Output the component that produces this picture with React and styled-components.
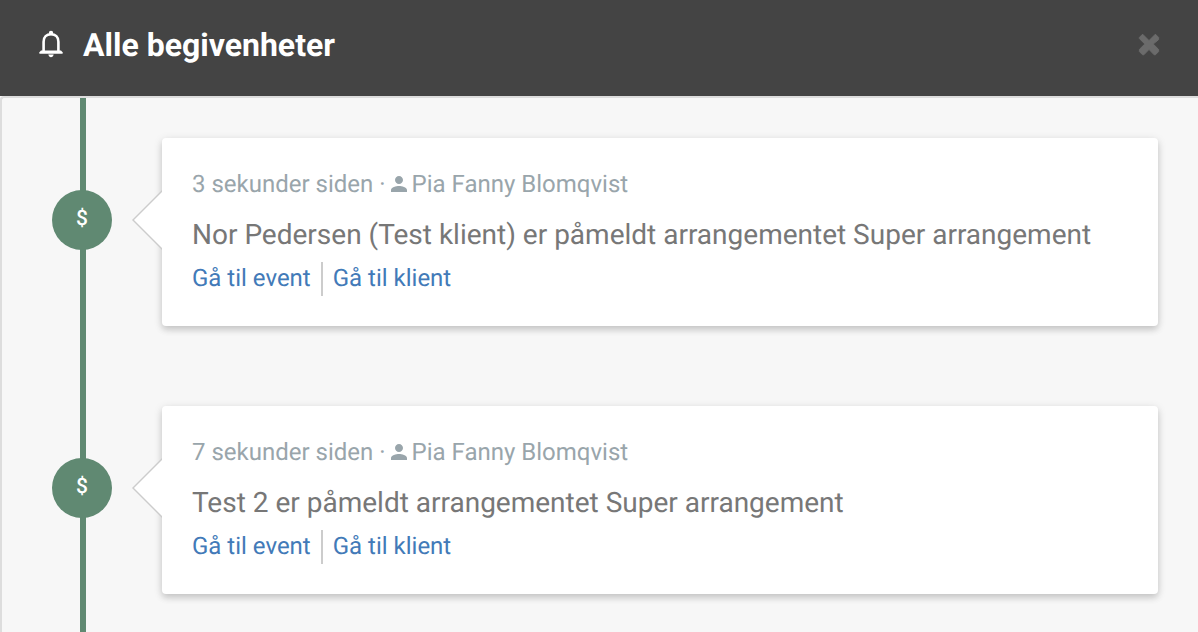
import React from 'react'
import styled, { createGlobalStyle } from 'styled-components'

const events = [
  {
    id: 1,
    time: '3 sekunder siden',
    user: 'Pia Fanny Blomqvist',
    text: 'Nor Pedersen (Test klient) er påmeldt arrangementet Super arrangement',
  },
  {
    id: 2,
    time: '7 sekunder siden',
    user: 'Pia Fanny Blomqvist',
    text: 'Test 2 er påmeldt arrangementet Super arrangement',
  },
]

function BellIcon() {
  return (
    <svg width="24" height="28" viewBox="0 0 24 28" fill="none" aria-hidden="true">
      <path d="M4.6 22V11.8C4.6 7 7.6 4.3 12 4.3s7.4 2.7 7.4 7.5V22" stroke="#fff" strokeWidth="2.6" />
      <path d="M2 20.6h20l1.6 1.6v1.5H.4v-1.5z" fill="#fff" />
      <path d="M9.3 24.6h5.4c-.3 1.6-1.4 2.6-2.7 2.6s-2.4-1-2.7-2.6z" fill="#fff" />
      <circle cx="12" cy="3" r="2.2" fill="#fff" />
    </svg>
  )
}

function CloseIcon() {
  return (
    <svg width="22" height="24" viewBox="0 0 22 24" aria-hidden="true">
      <path
        d="M4.6 2.2L11 8.6l6.4-6.4 3.2 3.2v2.2L15.2 12l5.4 5.4v2.2l-3.2 3.2h-1.2L11 17.4l-5.2 5.4H4.6l-3.2-3.2v-2.2L6.8 12 1.4 6.6V5.4z"
        fill="#6b6b6b"
        stroke="#6b6b6b"
        strokeWidth="1"
        strokeLinejoin="round"
      />
    </svg>
  )
}

function PersonIcon() {
  return (
    <svg width="16" height="16" viewBox="4 4 16 16" fill="currentColor" aria-hidden="true">
      <path d="M12 12c2.21 0 4-1.79 4-4s-1.79-4-4-4-4 1.79-4 4 1.79 4 4 4zm0 2c-2.67 0-8 1.34-8 4v2h16v-2c0-2.66-5.33-4-8-4z" />
    </svg>
  )
}

function App() {
  return (
    <>
      <GlobalStyle />
      <Header>
        <BellIcon />
        <Title>Alle begivenheter</Title>
        <CloseButton type="button" aria-label="Lukk">
          <CloseIcon />
        </CloseButton>
      </Header>
      <Timeline>
        {events.map((event) => (
          <Event key={event.id}>
            <Rail>
              <Badge>$</Badge>
            </Rail>
            <Card>
              <Meta>
                <span>{event.time} ·</span>
                <PersonIcon />
                <span>{event.user}</span>
              </Meta>
              <Message>{event.text}</Message>
              <Links>
                <Link href="#event">Gå til event</Link>
                <Link href="#klient">Gå til klient</Link>
              </Links>
            </Card>
          </Event>
        ))}
      </Timeline>
    </>
  )
}

export default App

const GlobalStyle = createGlobalStyle`
  * {
    box-sizing: border-box;
  }

  html {
    min-height: 100%;
    background: #f7f7f7;
  }

  body {
    margin: 0;
    font-family: Roboto, sans-serif;
    text-rendering: geometricPrecision;
    overflow-x: hidden;
  }
`

const Header = styled.header`
  display: flex;
  align-items: center;
  height: 96px;
  padding: 0 38px 8px 39px;
  background: #444;
`

const Title = styled.h1`
  flex: 1;
  margin: 0 0 0 20px;
  padding-top: 2px;
  color: #fff;
  font-size: 32px;
  line-height: 40px;
  font-weight: 700;
`

const CloseButton = styled.button`
  display: flex;
  padding: 0;
  border: 0;
  background: none;
  cursor: pointer;
`

const Timeline = styled.ul`
  margin: 0;
  padding: 0;
  list-style: none;
  border: 2px solid #ddd;
  border-width: 2px 0 0 2px;
  border-top-left-radius: 4px;
`

const Event = styled.li`
  display: flex;
  padding: 0 40px 0 50px;
`

const Rail = styled.div`
  flex: none;
  width: 60px;
  margin-right: 50px;
  padding-top: 92px;
  background: linear-gradient(#608972, #608972) 28px 0 / 6px 100% no-repeat;
`

const Badge = styled.div`
  display: flex;
  align-items: center;
  justify-content: center;
  width: 60px;
  height: 60px;
  padding-bottom: 2px;
  border-radius: 50%;
  background: #608972;
  color: #fff;
  font-size: 21px;
  font-weight: 500;
`

const Card = styled.article`
  position: relative;
  flex: 1;
  min-width: 0;
  margin: 40px 0;
  padding: 30px;
  border-radius: 4px;
  background: #fff;
  box-shadow: 0 2px 10px rgba(0, 0, 0, 0.12), 0 4px 6px rgba(0, 0, 0, 0.12);

  &::before {
    content: '';
    position: absolute;
    top: 52px;
    left: -30px;
    width: 30px;
    height: 60px;
    background: #ccc;
    clip-path: polygon(100% 0, 100% 100%, 0 50%);
  }

  &::after {
    content: '';
    position: absolute;
    top: 54px;
    left: -28px;
    width: 28px;
    height: 56px;
    background: #fff;
    clip-path: polygon(100% 0, 100% 100%, 0 50%);
  }
`

const Meta = styled.div`
  display: flex;
  align-items: center;
  gap: 5px;
  color: #99a5ab;
  font-size: 24px;
  line-height: 32px;
`

const Message = styled.p`
  margin: 16px 0 8px;
  color: #777;
  font-size: 28px;
  line-height: 38px;
`

const Links = styled.nav`
  display: flex;
`

const Link = styled.a`
  color: #427ab8;
  font-size: 24px;
  line-height: 32px;
  padding-bottom: 2px;
  text-decoration: none;

  & + & {
    margin-left: 10px;
    padding-left: 10px;
    border-left: 2px solid #ccc;
  }
`
